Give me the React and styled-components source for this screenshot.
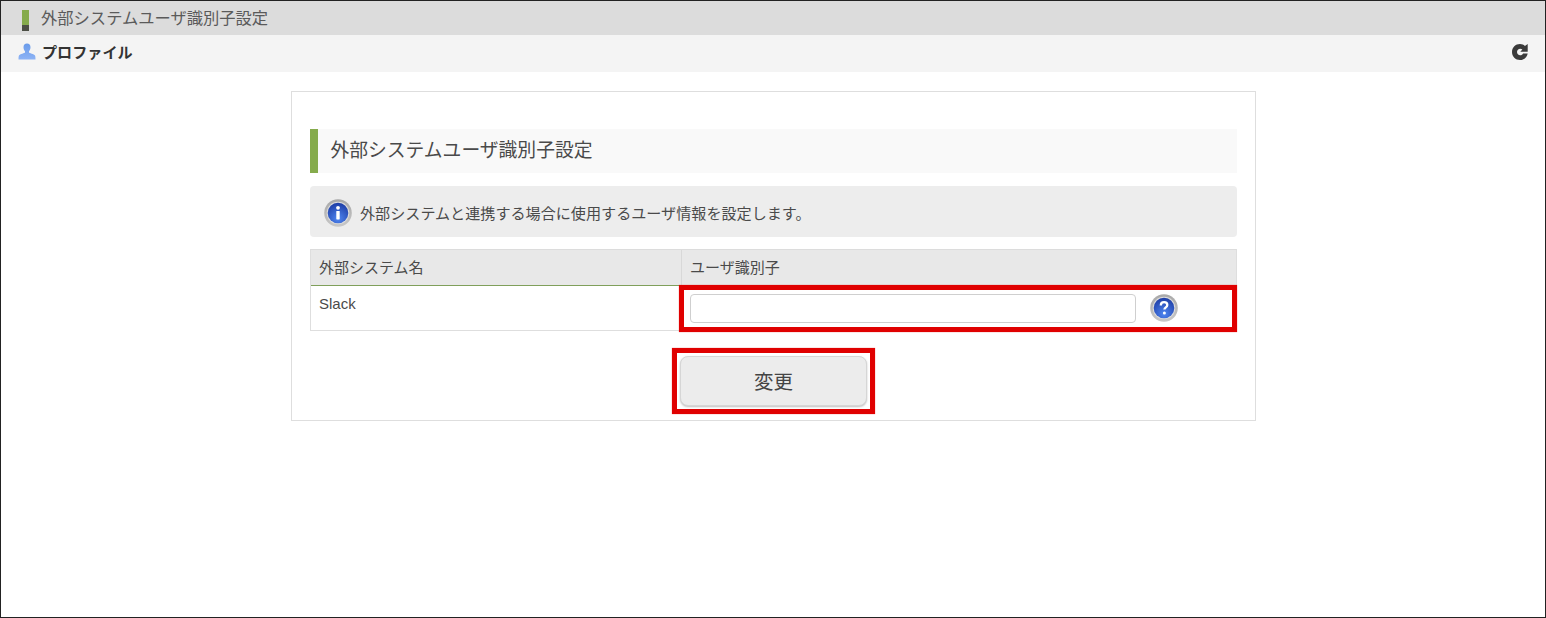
import React from "react";
import styled, { createGlobalStyle } from "styled-components";

const Global = createGlobalStyle`
  html, body { margin: 0; padding: 0; background: #fff; }
  body { font-family: "Liberation Sans", "Noto Sans CJK JP", sans-serif; color: #444; }
`;

const Page = styled.div`
  box-sizing: border-box;
  width: 1546px;
  height: 618px;
  border: 1px solid #222;
  overflow: hidden;
  display: flex;
  flex-direction: column;
`;

const TitleBar = styled.div`
  box-sizing: border-box;
  height: 34px;
  background: #dcdcdc;
  display: flex;
  align-items: center;
  gap: 12px;
  padding: 0 0 2px 21px;
  font-size: 16.3px;
  color: #5a5a5a;
`;

const TitleMark = styled.span`
  width: 7px;
  height: 21px;
  margin-top: 7px;
  display: flex;
  flex-direction: column;
  &::before { content: ""; height: 15px; background: #85ab4c; }
  &::after { content: ""; height: 6px; background: #4c4f45; }
`;

const SubBar = styled.div`
  box-sizing: border-box;
  height: 37px;
  background: #f4f4f4;
  display: flex;
  align-items: center;
  padding: 0 16px 4px 17px;
  gap: 6px;
`;

const SubTitle = styled.span`
  flex: 1;
  margin-bottom: 2px;
  font-size: 15.1px;
  font-weight: 700;
  color: #333;
`;

const Main = styled.div`
  flex: 1;
  display: flex;
  justify-content: center;
  padding-top: 19px;
`;

const Card = styled.div`
  box-sizing: border-box;
  width: 965px;
  height: 330px;
  margin-left: 1px;
  border: 1px solid #dedede;
  padding: 37px 18px 0;
`;

const Heading = styled.h2`
  box-sizing: border-box;
  margin: 0;
  height: 44px;
  width: 927px;
  background: #f9f9f9;
  border-left: 8px solid #85ab4c;
  padding-left: 12.5px;
  font-size: 18.8px;
  font-weight: 400;
  line-height: 43px;
  color: #4a4a4a;
`;

const Info = styled.div`
  box-sizing: border-box;
  margin-top: 13px;
  height: 51px;
  width: 927px;
  border-radius: 4px;
  background: #ededed;
  display: flex;
  align-items: center;
  gap: 8px;
  padding-left: 14px;
  font-size: 15.1px;
  color: #4a4a4a;
`;

const InfoIcon = styled.span`
  display: flex;
  margin-top: 2px;
`;

const Table = styled.div`
  box-sizing: border-box;
  margin-top: 12px;
  width: 927px;
  display: grid;
  grid-template-columns: 370px 1fr;
  border: 1px solid #dedede;
  border-top-color: #dcdcdc;
`;

const HeadCell = styled.div`
  box-sizing: border-box;
  height: 36px;
  background: #e8e8e8;
  border-bottom: 1px solid #7f9f5a;
  border-left: ${p => (p.$second ? "1px solid #d8d8d8" : "none")};
  padding-left: 8px;
  font-size: 15px;
  line-height: 35px;
  color: #4a4a4a;
`;

const Cell = styled.div`
  box-sizing: border-box;
  height: 44px;
  padding: 9px 8px 0;
  font-size: 15px;
  color: #4a4a4a;
`;

const InputCell = styled(Cell)`
  padding-top: 8px;
  border-left: 1px solid #dedede;
  display: flex;
  gap: 14px;
  position: relative;
`;

const CellHighlight = styled.span`
  position: absolute;
  left: -3px;
  right: -1px;
  top: -1px;
  bottom: -2px;
  border: 5px solid #e00000;
  box-shadow: 0 0 1px rgba(224, 0, 0, 0.6);
  pointer-events: none;
`;

const Input = styled.input`
  box-sizing: border-box;
  width: 446px;
  height: 29px;
  margin: 0;
  border: 1px solid #cfcfcf;
  border-radius: 4px;
  background: #fff;
`;

const Actions = styled.div`
  display: flex;
  justify-content: center;
  margin-top: 17px;
`;

const ButtonFrame = styled.div`
  border: 5px solid #e00000;
  box-shadow: 0 0 1px rgba(224, 0, 0, 0.6);
  padding: 3px;
  display: flex;
`;

const Button = styled.button`
  box-sizing: border-box;
  width: 187px;
  height: 50px;
  border: 1px solid #d6d6d6;
  border-radius: 8px;
  background: #ececec;
  box-shadow: 0 1px 2px rgba(0, 0, 0, 0.25);
  font-family: inherit;
  font-size: 19.5px;
  padding-bottom: 3px;
  color: #444;
`;

const Glossy = ({ id, glyph }) => (
  <svg width="28" height="28" viewBox="0 0 28 28" style={{ flex: "none" }}>
    <defs>
      <radialGradient id={id} cx="50%" cy="78%" r="75%">
        <stop offset="0%" stopColor="#4f86f0" />
        <stop offset="100%" stopColor="#1f3fa8" />
      </radialGradient>
      <linearGradient id={`${id}r`} x1="0" y1="0" x2="0" y2="1">
        <stop offset="0%" stopColor="#a8a8a8" />
        <stop offset="100%" stopColor="#c8c8c8" />
      </linearGradient>
    </defs>
    <circle cx="14" cy="14" r="13.8" fill={`url(#${id}r)`} />
    <circle cx="14" cy="14" r="11.3" fill="#dcdcdc" />
    <circle cx="14" cy="14" r="10.3" fill={`url(#${id})`} />
    {glyph === "i" ? (
      <g fill="#fff">
        <circle cx="14" cy="8.8" r="1.9" />
        <rect x="12.3" y="12" width="3.4" height="8.4" rx="0.6" />
      </g>
    ) : (
      <g>
        <path d="M10.8 11.4c0-2 1.4-3.2 3.300-3.200s3.200 1.100 3.200 2.800c0 2.400-2.900 2.300-2.900 4.600" fill="none" stroke="#fff" strokeWidth="2.3" />
        <circle cx="14.4" cy="18.9" r="1.5" fill="#fff" />
      </g>
    )}
  </svg>
);

const PersonIcon = () => (
  <svg width="18" height="18" viewBox="0 0 18 18" style={{ flex: "none" }}>
    <defs>
      <linearGradient id="person" x1="0" y1="0" x2="0" y2="1">
        <stop offset="0%" stopColor="#6a9bea" />
        <stop offset="100%" stopColor="#8db3f5" />
      </linearGradient>
    </defs>
    <path
      d="M9 .5c2.300 0 3.500 1.700 3.500 3.800 0 1.700-.7 3.100-1.500 3.900v1.300c0 .8 5.200 1.300 6 3 .4.800.5 2.100.5 4H.5c0-1.900.1-3.200.5-4 .8-1.700 6-2.200 6-3V8.200C6.200 7.400 5.500 6 5.500 4.300 5.500 2.200 6.700.5 9 .5z"
      fill="url(#person)"
    />
  </svg>
);

const RefreshIcon = () => (
  <svg width="18" height="18" viewBox="0 0 18 18" style={{ flex: "none" }}>
    <path
      d="M9 1c2 0 3.700.7 4.900 1.900L16.700 1v7.700H9.300l2.100-2.200C10.700 6 10 5.800 9.200 5.800 7.400 5.800 6 7.200 6 9s1.400 3.200 3.200 3.200c1.300 0 2.400-.7 2.900-1.800h4.600c-.8 3.900-3.800 6.600-7.700 6.600-4.500 0-8-3.500-8-8s3.500-8 8-8z"
      fill="#3a3a3a"
    />
  </svg>
);

export default function App() {
  return (
    <>
      <Global />
      <Page>
        <TitleBar>
          <TitleMark />
          外部システムユーザ識別子設定
        </TitleBar>
        <SubBar>
          <PersonIcon />
          <SubTitle>プロファイル</SubTitle>
          <RefreshIcon />
        </SubBar>
        <Main>
          <Card>
            <Heading>外部システムユーザ識別子設定</Heading>
            <Info>
              <InfoIcon>
                <Glossy id="gi" glyph="i" />
              </InfoIcon>
              外部システムと連携する場合に使用するユーザ情報を設定します。
            </Info>
            <Table>
              <HeadCell>外部システム名</HeadCell>
              <HeadCell $second>ユーザ識別子</HeadCell>
              <Cell>Slack</Cell>
              <InputCell>
                <Input />
                <Glossy id="gq" glyph="q" />
                <CellHighlight />
              </InputCell>
            </Table>
            <Actions>
              <ButtonFrame>
                <Button>変更</Button>
              </ButtonFrame>
            </Actions>
          </Card>
        </Main>
      </Page>
    </>
  );
}
